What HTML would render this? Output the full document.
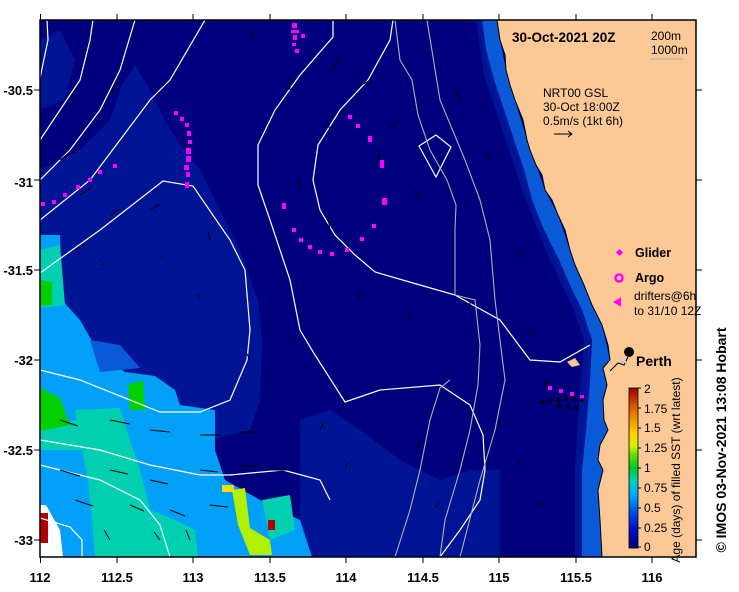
<!DOCTYPE html>
<html><head><meta charset="utf-8"><style>
html,body{margin:0;padding:0;background:#fff;width:739px;height:592px;overflow:hidden}
svg{display:block;font-family:"Liberation Sans",sans-serif}
</style></head><body>
<svg width="739" height="592" viewBox="0 0 739 592" xmlns="http://www.w3.org/2000/svg">
<defs>
<clipPath id="pc"><rect x="40" y="20" width="656" height="537"/></clipPath>
<linearGradient id="cb" x1="0" y1="1" x2="0" y2="0">
<stop offset="0" stop-color="#00007f"/><stop offset="0.12" stop-color="#0010c8"/>
<stop offset="0.25" stop-color="#0060f0"/><stop offset="0.33" stop-color="#00a8ff"/>
<stop offset="0.42" stop-color="#00d0c0"/><stop offset="0.5" stop-color="#00c830"/>
<stop offset="0.58" stop-color="#60e000"/><stop offset="0.64" stop-color="#d8f000"/>
<stop offset="0.72" stop-color="#ffd000"/><stop offset="0.85" stop-color="#e87000"/>
<stop offset="1" stop-color="#a00000"/></linearGradient>
</defs>
<g clip-path="url(#pc)">
<rect x="40" y="20" width="656" height="537" fill="#00007f"/>
<polygon fill="#001496" points="40,170 80,150 110,120 122,85 135,65 150,90 165,120 180,145 200,170 215,200 240,250 258,300 262,340 260,400 250,430 210,440 40,440"/>
<polygon fill="#001496" points="300,420 330,410 360,430 400,460 440,480 470,470 500,470 500,557 300,557"/>
<polygon fill="#001496" points="40,40 60,30 75,60 65,100 40,110"/>
<polygon fill="#00a0f8" points="40,235 60,235 62,300 80,320 100,355 125,372 155,376 175,390 180,405 215,410 215,450 225,480 260,500 300,520 312,557 40,557"/>
<polygon fill="#0a5ad8" points="90,340 120,345 140,368 100,372"/>
<polygon fill="#00d0b0" points="40,250 60,245 65,305 40,308"/>
<polygon fill="#00d0b0" points="75,410 120,408 130,440 140,470 150,510 175,520 195,530 198,557 95,557 92,520 88,480 82,450"/>
<polygon fill="#00d0b0" points="40,425 80,420 90,450 40,450"/>
<polygon fill="#00d0b0" points="262,500 290,495 295,530 270,540"/>
<polygon fill="#00d000" points="40,280 52,282 52,305 40,305"/>
<polygon fill="#00d000" points="40,388 60,398 70,425 45,430 40,430"/>
<polygon fill="#00d000" points="128,385 143,380 145,410 130,410"/>
<polygon fill="#b0f000" points="232,490 245,488 250,528 270,540 272,555 250,555 238,525"/>
<rect x="222" y="485" width="12" height="7" fill="#f0e000"/>
<polygon fill="#ffffff" points="40,505 46,505 60,530 63,557 40,557"/>
<rect x="40" y="513" width="8" height="30" fill="#b00000"/>
<rect x="268" y="520" width="7" height="10" fill="#b00000"/>
<polygon fill="#0a5ad8" points="482,20 497,20 500,40 506,70 515,100 527,140 536,165 545,190 558,215 570,250 584,285 602,325 610,360 603,368 607,385 603,400 604,420 608,430 600,445 603,470 598,490 600,520 602,557 582,557 582,470 586,430 590,380 592,340 582,310 572,290 559,260 544,230 532,200 524,170 514,140 504,110 494,80 486,50"/>
<polygon fill="#001496" points="476,20 482,20 486,50 494,80 504,110 514,140 524,170 532,200 544,230 559,260 572,290 582,310 592,340 590,380 586,430 582,470 582,557 575,557 575,470 578,420 582,370 584,340 574,310 562,285 548,255 536,225 524,195 514,165 504,135 494,105 484,75"/>
<polygon fill="#fcc896" stroke="#000" stroke-width="1" points="497,20 500,40 505,55 506,70 510,85 515,100 523,120 527,140 530,150 536,165 542,175 545,190 552,200 558,215 565,230 570,250 575,265 584,285 592,305 602,325 608,345 610,360 603,368 607,385 603,400 604,420 608,430 600,445 598,460 603,470 598,490 600,520 602,557 700,557 700,15 497,15"/>
<polygon fill="#fcc896" points="567,362 575,358 580,365 572,367"/>
<g fill="none" stroke="#fff" stroke-width="1.2">
<polyline points="40,78 48,40 47,20"/>
<polyline points="40,140 60,110 80,80 90,40 93,20"/>
<polyline points="40,180 70,150 100,110 120,70 135,20"/>
<polyline points="40,220 90,180 120,140 150,100 170,80 205,20"/>
<polyline points="40,273 100,230 163,181 193,186 230,240 245,270 250,330 247,360 230,400 200,412 160,412 130,400 80,380 40,370"/>
<polyline points="333,20 333,37 300,75 275,110 258,145 258,185 270,220 290,280 300,330 315,355 345,402 380,390 440,385 470,405 483,435 485,470 480,500 460,530 440,557"/>
<polyline points="393,20 390,40 368,80 340,110 318,145 313,180 320,210 335,235 355,255 375,272 420,285 455,295 500,320 530,360 560,362 590,345"/>
<polyline points="40,440 100,450 150,465 200,475 230,475 283,470 320,480 330,500"/>
<polyline points="40,465 100,480 140,500 160,525 170,557"/>
<polyline points="40,518 70,527 82,540 82,557"/>
<polygon points="419,146 436,135 451,147 436,177"/>
</g>
<g fill="none" stroke="#b0b0b0" stroke-width="1.1">
<polyline points="395,20 400,60 412,80 418,115 430,150 447,180 456,205 455,230 455,295 475,300 480,345 478,385 470,430 460,470 445,520 440,557"/>
<polyline points="427,20 440,100 465,160 480,200 490,240 495,300 500,340 505,380 495,430 480,480 460,557"/>
<polyline points="450,380 440,388 430,420 420,470 410,510 395,557"/>
</g>
<g stroke="#000" stroke-width="1" fill="none">
<path d="M70,100l8-14M110,95l6-14M60,160l10-8M80,195l12-8M110,215l10-6M150,210l10-6M75,250l10-6M100,265l4-2M160,260l3-2M210,240l-2-8M200,300l-2-6M250,360l-4-8M290,90l-1-12M330,130l-3-10M300,190l-2-12M330,230l-2-12M380,160l-3-12M420,200l-6-10M360,300l-2-10M410,320l-2-8M460,100l-6-10M250,40l4-10M340,60l-8 8M370,80l-10 6M400,120l-10 8M60,420l18 6M110,420l20 4M150,430l20 2M200,435l20 0M240,432l20 0M60,470l20 6M110,470l18 4M150,480l18 4M200,470l18 2M75,500l18 6M130,505l14 6M170,510l15 6M210,505l18 2M110,540l-6-10M160,540l-6-8M190,540l-4-10M240,466l18 0M270,470l18 0M345,470l3 -8M320,430l4-8M420,440l-3 8M440,500l-4 8M500,420l-2 8M520,460l-2 6M540,500l0 8M470,300l0 8M520,250l0 8M490,160l-4-8M530,330l0 8"/>
</g>
<g fill="#ff00ff">
<rect x="292" y="23" width="5" height="5"/><rect x="291" y="30" width="8" height="3"/><rect x="293" y="35" width="4" height="5"/><rect x="301" y="34" width="4" height="4"/><rect x="292" y="43" width="4" height="3"/><rect x="295" y="49" width="4" height="4"/>
<rect x="174" y="111" width="4" height="4"/><rect x="180" y="117" width="4" height="4"/><rect x="185" y="123" width="4" height="4"/><rect x="187" y="131" width="4" height="5"/><rect x="188" y="140" width="4" height="4"/><rect x="186" y="148" width="5" height="6"/><rect x="186" y="156" width="5" height="6"/><rect x="184" y="165" width="5" height="5"/><rect x="186" y="172" width="4" height="5"/><rect x="185" y="182" width="4" height="6"/>
<rect x="41" y="202" width="4" height="4"/><rect x="52" y="200" width="4" height="4"/><rect x="63" y="193" width="4" height="4"/><rect x="76" y="185" width="4" height="4"/><rect x="88" y="178" width="4" height="4"/><rect x="98" y="170" width="4" height="4"/><rect x="113" y="164" width="4" height="4"/>
<rect x="348" y="115" width="4" height="4"/><rect x="356" y="124" width="4" height="4"/><rect x="368" y="136" width="4" height="6"/><rect x="380" y="160" width="4" height="8"/><rect x="382" y="198" width="5" height="7"/><rect x="372" y="224" width="4" height="4"/><rect x="360" y="237" width="4" height="4"/><rect x="345" y="248" width="4" height="4"/><rect x="330" y="252" width="4" height="4"/><rect x="318" y="250" width="4" height="4"/><rect x="308" y="245" width="4" height="4"/><rect x="299" y="238" width="4" height="4"/><rect x="292" y="228" width="4" height="4"/><rect x="282" y="203" width="4" height="6"/>
<rect x="548" y="386" width="4" height="4"/><rect x="559" y="389" width="4" height="4"/><rect x="570" y="392" width="4" height="4"/><rect x="580" y="395" width="4" height="4"/>
</g>
<g fill="#000">
<circle cx="545" cy="384" r="2"/><circle cx="542" cy="402" r="2"/><circle cx="550" cy="401" r="2"/><circle cx="558" cy="400" r="2"/><circle cx="566" cy="399" r="2"/><circle cx="574" cy="399" r="2"/><circle cx="582" cy="400" r="2"/><circle cx="559" cy="406" r="2"/><circle cx="568" cy="407" r="2"/><circle cx="576" cy="408" r="2"/>
</g>
</g>
<rect x="40" y="20" width="656" height="537" fill="none" stroke="#000" stroke-width="1.5"/>
<g stroke="#000" stroke-width="1">
<path d="M40.5,14v6M117,14v6M193,14v6M270,14v6M346,14v6M423,14v6M499,14v6M576,14v6M652,14v6"/>
<path d="M40.5,557v6M117,557v6M193,557v6M270,557v6M346,557v6M423,557v6M499,557v6M576,557v6M652,557v6"/>
<path d="M34,90h6M34,180h6M34,270h6M34,360h6M34,450h6M34,540h6"/>
<path d="M696,90h6M696,180h6M696,270h6M696,360h6M696,450h6M696,540h6"/>
</g>
<g font-size="13" font-weight="bold" fill="#000" text-anchor="end">
<text x="33" y="95">-30.5</text><text x="33" y="187">-31</text><text x="33" y="275">-31.5</text><text x="33" y="365">-32</text><text x="33" y="455">-32.5</text><text x="33" y="545">-33</text>
</g>
<g font-size="13" font-weight="bold" fill="#000" text-anchor="middle">
<text x="40" y="582">112</text><text x="117" y="582">112.5</text><text x="193" y="582">113</text><text x="270" y="582">113.5</text><text x="346" y="582">114</text><text x="423" y="582">114.5</text><text x="499" y="582">115</text><text x="576" y="582">115.5</text><text x="652" y="582">116</text>
</g>
<text x="512" y="42" font-size="13.5" font-weight="bold">30-Oct-2021 20Z</text>
<text x="651" y="40" font-size="12">200m</text>
<text x="651" y="54" font-size="12">1000m</text>
<line x1="650" y1="59" x2="683" y2="59" stroke="#aaa" stroke-width="1"/>
<g font-size="12"><text x="543" y="97">NRT00 GSL</text><text x="543" y="111">30-Oct 18:00Z</text><text x="543" y="125">0.5m/s (1kt 6h)</text></g>
<path d="M554,134h18M568,131l4,3l-4,3" stroke="#000" fill="none"/>
<rect x="617" y="250" width="5" height="5" fill="#ff00ff" transform="rotate(45 619.5 252.5)"/>
<text x="635" y="257" font-size="12.5" font-weight="bold">Glider</text>
<circle cx="619" cy="278" r="3.5" fill="none" stroke="#ff00ff" stroke-width="2.5"/>
<text x="635" y="282" font-size="12.5" font-weight="bold">Argo</text>
<path d="M620,299l-5,3l5,3z" fill="#ff00ff" stroke="#ff00ff" stroke-width="2"/>
<g font-size="12"><text x="634" y="300">drifters@6h</text><text x="634" y="315">to 31/10 12Z</text></g>
<circle cx="629" cy="352" r="5" fill="#000"/>
<path d="M610,371l8-8l6,2l4-8" stroke="#000" fill="none"/><path d="M620,362l6,0" stroke="#9cf" stroke-width="2"/>
<text x="636" y="366" font-size="14" font-weight="bold">Perth</text>
<rect x="629" y="388" width="9" height="160" fill="url(#cb)" stroke="#000" stroke-width="0.8"/>
<g font-size="12" fill="#000">
<text x="644" y="393">2</text><text x="644" y="413">1.75</text><text x="644" y="432">1.5</text><text x="644" y="452">1.25</text><text x="644" y="472">1</text><text x="644" y="492">0.75</text><text x="644" y="512">0.5</text><text x="644" y="532">0.25</text><text x="644" y="551">0</text>
</g>
<g stroke="#000"><path d="M638,388h3M638,408h3M638,428h3M638,448h3M638,468h3M638,488h3M638,508h3M638,528h3M638,547h3"/></g>
<text transform="translate(680,470) rotate(-90)" font-size="12" text-anchor="middle">Age (days) of filled SST (wrt latest)</text>
<text transform="translate(726,440) rotate(-90)" font-size="14" font-weight="bold" text-anchor="middle">©  IMOS 03-Nov-2021 13:08 Hobart</text>
</svg>
</body></html>
